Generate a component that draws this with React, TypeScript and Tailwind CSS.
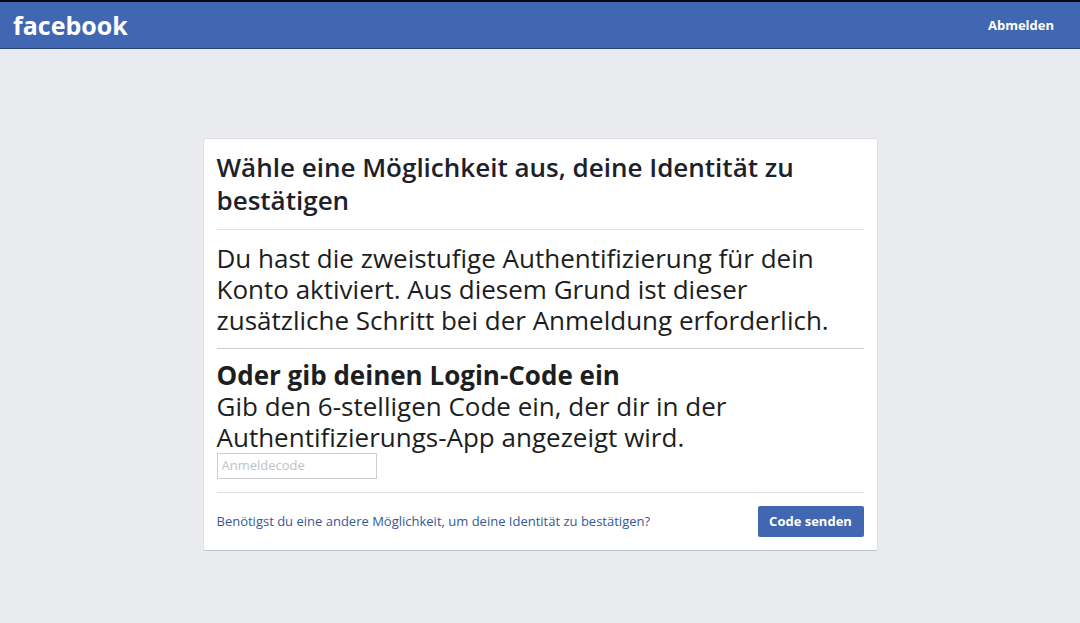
import React, { useState } from 'react';

const Header: React.FC = () => (
  <header className="flex items-center justify-between h-[49px] pl-[13px] pr-[26px] bg-[#4267b2] border-t-2 border-t-[#05060f] border-b border-b-[#29487d]">
    <a href="#" className="text-[25px] leading-8 font-bold text-white">
      facebook
    </a>
    <button type="button" className="text-[13px] leading-4 font-bold text-white">
      Abmelden
    </button>
  </header>
);

const App: React.FC = () => {
  const [code, setCode] = useState('');

  const handleSubmit = (e: React.FormEvent) => {
    e.preventDefault();
  };

  return (
    <div className="min-h-screen bg-[#e9ebee] font-['Open_Sans',sans-serif] text-[#1c1e21]">
      <Header />
      <main className="pt-[89px] pb-[72px]">
        <form
          onSubmit={handleSubmit}
          className="w-5/8 mx-auto px-[13px] bg-white border border-[#dddfe2] border-b-[#bec3c9] rounded-[3px]"
        >
          <h1 className="pt-3 pb-3 text-[26px] leading-[33px] font-semibold text-[#1d2129] border-b border-[#dddfe2]">
            Wähle eine Möglichkeit aus, deine Identität zu bestätigen
          </h1>
          <p className="pt-[13px] pb-3 text-[26px] leading-[31px] border-b border-[#ccced2]">
            Du hast die zweistufige Authentifizierung für dein Konto aktiviert. Aus diesem Grund ist dieser
            zusätzliche Schritt bei der Anmeldung erforderlich.
          </p>
          <div className="pt-[11px] pb-[13px] text-[26px] leading-[31px] border-b border-[#dddfe2]">
            <h2 className="font-bold">Oder gib deinen Login-Code ein</h2>
            <label htmlFor="login-code" className="block">
              Gib den 6-stelligen Code ein, der dir in der Authentifizierungs-App angezeigt wird.
            </label>
            <input
              id="login-code"
              type="text"
              value={code}
              onChange={(e) => setCode(e.target.value)}
              placeholder="Anmeldecode"
              className="block w-40 h-[26px] px-1 pb-0.5 text-[13px] leading-4 border border-[#ccd0d5] placeholder:text-[#bec3c9]"
            />
          </div>
          <div className="flex items-center justify-between py-[13px]">
            <a href="#" className="pb-0.5 text-[13px] leading-4 text-[#365899]">
              Benötigst du eine andere Möglichkeit, um deine Identität zu bestätigen?
            </a>
            <button
              type="submit"
              className="w-[106px] h-[31px] pb-0.5 text-[13px] leading-4 font-bold text-white bg-[#4267b2] rounded-[2px]"
            >
              Code senden
            </button>
          </div>
        </form>
      </main>
    </div>
  );
};

export default App;
